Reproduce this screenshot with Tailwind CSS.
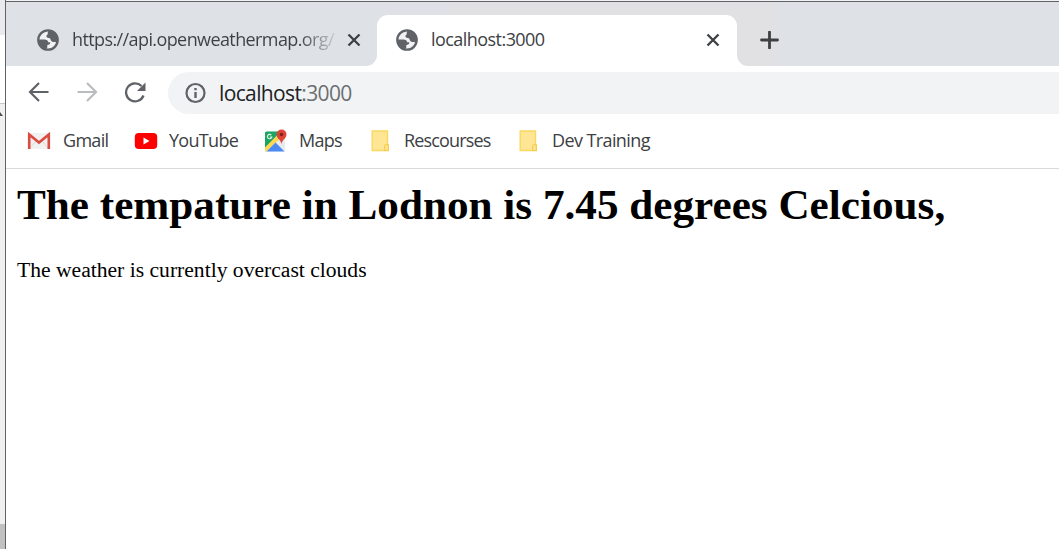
<!DOCTYPE html>
<html lang="en">
<head>
<meta charset="utf-8">
<title>localhost:3000</title>
<script src="https://cdn.jsdelivr.net/npm/@tailwindcss/browser@4"></script>
</head>
<body class="w-[1059px] h-[549px] overflow-hidden bg-white flex font-['Open_Sans','Noto_Sans',sans-serif] text-[#3c4043]">
<svg width="0" height="0" class="absolute">
  <symbol id="globe" viewBox="0 0 22 22">
    <circle cx="11" cy="11" r="9.700" fill="#f1f2f4" stroke="#5f6368" stroke-width="2.300"/>
    <path fill="#5f6368" d="M12 1c5.500 0 9 4.500 9 10 0 1.500-.3 2.500-.8 3.500-1-.2-1.500-.8-2-1.700-1.200.4-3.200.2-4.200-1.300-.8-1.200-.3-2-1.200-2.300-1.500-.4-3-.2-3.400-1.600-.3-1.300 1-1.600 1.300-2.600.2-1-.4-1.900 1.300-4z"/>
    <path fill="#5f6368" d="M1.200 10.500h6.300c2 0 3.600 1 3.600 2.800h2.200c.2 2-1.300 2.600-3 2.700v2.600c-.4.900-1.100 1.400-2 1.800C4 19 1 15.500 1.200 10.500z"/>
  </symbol>
  <symbol id="folder" viewBox="0 0 20 24">
    <path d="M2.200 2h15.300v13.500h.8v6h-16.100z" fill="#ffe694" stroke="#fbd860" stroke-width="1.400"/>
    <path d="M14.700 21.500v-4.300q0-1.700 1.800-1.700t1.800 1.700v4.300z" fill="#ffe694" stroke="#f6cc4a" stroke-width="1.200"/>
  </symbol>
</svg>
<aside class="w-[6px] shrink-0 flex flex-col border-r border-[#606266] bg-[#f0f0f0]">
  <div class="h-[35px] bg-[#e8eaed]"></div>
  <div class="h-[68px] bg-white"></div>
  <div class="h-[15px] border-t border-[#c8c8c8] flex items-end"><svg width="3" height="5" class="mb-px"><path d="M0 0L3 4H0z" fill="#505050"/></svg></div>
  <div class="flex-1"></div>
  <div class="h-[25px] bg-[#c1c1c1]"></div>
</aside>
<div class="flex-1 min-w-0 flex flex-col">
  <div class="h-[2px] bg-[#f1f3f4] border-b border-[#606266]"></div>
  <div class="h-[64px] flex bg-white">
    <div class="w-[371px] flex items-center bg-[#dee1e6] rounded-br-[11px] pl-[31px] pt-[12px]">
      <svg width="22" height="22"><use href="#globe"/></svg>
      <span class="ml-[13px] mb-[2px] w-[264px] whitespace-nowrap text-[18px] tracking-[-0.6px] bg-linear-to-r from-[#3c4043] from-86% to-[#3c4043]/10 bg-clip-text text-transparent">https://api.openweathermap.org/</span>
      <svg width="14" height="14" class="ml-[11px]"><path d="M1.500 1.500l11 11M12.500 1.500l-11 11" stroke="#3c4043" stroke-width="2.300"/></svg>
    </div>
    <div class="w-[360px] bg-linear-to-r from-[#dee1e6] from-20% to-[#e1e0e3] to-20%">
      <div class="h-[51px] mt-[13px] bg-white rounded-t-[11px] flex items-center pl-[19px]">
        <svg width="22" height="22" class="mb-[2px]"><use href="#globe"/></svg>
        <span class="ml-[13px] mb-[2px] w-[264px] whitespace-nowrap text-[18px] tracking-[-0.55px]">localhost:3000</span>
        <svg width="14" height="14" class="ml-[11px] mb-px"><path d="M1.500 1.500l11 11M12.500 1.500l-11 11" stroke="#3c4043" stroke-width="2.300"/></svg>
      </div>
    </div>
    <div class="flex-1 bg-linear-to-r from-[#e1e0e3] from-[39px] to-[#dee1e6] to-[39px] rounded-bl-[11px] flex items-center pl-[23px] pt-[12px]">
      <svg width="19" height="18"><path d="M9.500 1v16M1.500 9h16" stroke="#3c4043" stroke-width="2.800" stroke-linecap="round"/></svg>
    </div>
  </div>
  <div class="h-[53px] flex items-start pt-[6px] pl-[22px]">
    <svg width="22" height="20" viewBox="0 0 22 20" class="mt-[10px]" fill="none" stroke="#5f6368" stroke-width="2.200"><path d="M20.500 10H3M11 1L2 10l9 9"/></svg>
    <svg width="22" height="20" viewBox="0 0 22 20" class="mt-[10px] ml-[26px]" fill="none" stroke="#babcbe" stroke-width="2.200"><path d="M1.500 10H19M11 1l9 9-9 9"/></svg>
    <svg width="22" height="22" viewBox="0 0 22 22" class="mt-[9px] ml-[26px]"><path d="M19.500 14.500A9 9 0 1 1 17.500 5" fill="none" stroke="#5f6368" stroke-width="2.300"/><path d="M21.500 1.500v8.500H13z" fill="#5f6368"/></svg>
    <div class="ml-[22px] h-[42px] flex-1 rounded-l-full bg-[#f1f3f4] flex items-center pl-[16px]">
      <svg width="22" height="22" viewBox="0 0 22 22"><circle cx="11.500" cy="11" r="9" fill="none" stroke="#5f6368" stroke-width="2.200"/><path d="M11.500 10v6M11.500 6v2.200" stroke="#5f6368" stroke-width="2.400"/></svg>
      <span class="ml-[13px] mt-[2px] text-[21px] whitespace-nowrap tracking-[-0.63px] text-[#202124]">localhost<span class="text-[#6b6f73]">:3000</span></span>
    </div>
  </div>
  <div class="h-[50px] flex border-b border-[#d8dadd] pl-[21px] text-[18px] whitespace-nowrap pb-[4px]">
    <div class="w-[107px] flex items-center">
      <svg width="24" height="18" viewBox="0 0 24 18" class="mb-px"><path d="M2 1h20v16H2z" fill="#f1f1f1"/><path d="M2 17l7-8M22 17l-7-8" stroke="#ddd"/><path d="M2.200 17V2.500L12 10.500l9.800-8V17" fill="none" stroke="#dc4b40" stroke-width="2.600"/></svg>
      <span class="ml-[12px] mb-[2px] tracking-[-0.7px]">Gmail</span>
    </div>
    <div class="w-[130px] flex items-center">
      <svg width="24" height="18" viewBox="0 0 24 18" class="mb-px"><rect x=".8" y="1" width="22.400" height="16" rx="4" fill="#f00"/><path d="M9.500 5.500v7l6-3.500z" fill="#fff"/></svg>
      <span class="ml-[11px] mb-[2px] tracking-[-0.7px]">YouTube</span>
    </div>
    <div class="w-[105px] flex items-center">
      <svg width="24" height="24" viewBox="0 0 24 24" class="mb-[2px]"><rect x="1" y="2.500" width="20" height="20" rx="1.500" fill="#e8eaec"/><path d="M1 4Q1 2.500 2.500 2.500H17L1 19z" fill="#1da462"/><path d="M1 18.500L15.500 4l3 3L2.500 22.500H1z" fill="#ffd84d"/><path d="M2.500 22.500l9-9 9 9z" fill="#4c8bf5"/><path d="M7.300 6.100a2.200 2.200 0 1 0 .5 1.900H5.800" fill="none" stroke="#e8f5e9" stroke-width="1.200"/><path d="M17.500.5a5 5 0 0 1 5 5c0 4-4 4.500-5 9.500-1-5-5-5.500-5-9.500a5 5 0 0 1 5-5z" fill="#dc4437"/><circle cx="17.500" cy="5.500" r="1.800" fill="#7b231e"/></svg>
      <span class="ml-[11px] mb-[2px] tracking-[-0.7px]">Maps</span>
    </div>
    <div class="w-[148px] flex items-center pl-px">
      <svg width="20" height="24" class="mb-px"><use href="#folder"/></svg>
      <span class="ml-[14px] mb-[2px] tracking-[-0.85px]">Rescourses</span>
    </div>
    <div class="flex items-center pl-px">
      <svg width="20" height="24" class="mb-px"><use href="#folder"/></svg>
      <span class="ml-[14px] mb-[2px] tracking-[-0.6px]">Dev Training</span>
    </div>
  </div>
  <main class="flex-1 pl-[11px] text-black font-['Liberation_Serif',serif]">
    <h1 class="mt-[11px] text-[43.2px] leading-[50px] font-bold whitespace-nowrap">The tempature in Lodnon is 7.45 degrees Celcious,</h1>
    <p class="mt-[27px] text-[21.6px] leading-[26px] whitespace-nowrap">The weather is currently overcast clouds</p>
  </main>
</div>
</body>
</html>
